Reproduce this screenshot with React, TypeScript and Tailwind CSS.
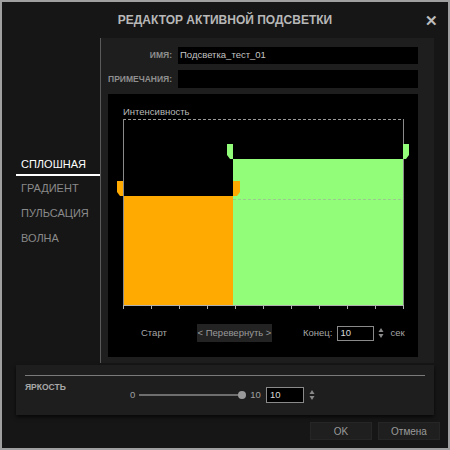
import React from 'react';

const menu = ['СПЛОШНАЯ', 'ГРАДИЕНТ', 'ПУЛЬСАЦИЯ', 'ВОЛНА'];

function Spinner() {
  return (
    <svg width="6" height="12" viewBox="0 0 6 12" className="shrink-0 block">
      <polygon points="3,1 5.5,5 0.5,5" fill="#8a8a8a" />
      <polygon points="0.5,7 5.5,7 3,11" fill="#8a8a8a" />
    </svg>
  );
}

function Chart() {
  const ticks = Array.from({ length: 11 }, (_, i) => 15 + i * 28);
  return (
    <svg width="310" height="192" viewBox="0 0 310 192" className="block">
      {/* blocks */}
      <rect x="15" y="77" width="110" height="109" fill="#ffaa00" />
      <rect x="125" y="40" width="170" height="146" fill="#91fd78" />
      {/* frame */}
      <line x1="15" y1="0.5" x2="295" y2="0.5" stroke="#9a9a9a" strokeDasharray="3 2" />
      <line x1="15.5" y1="0" x2="15.5" y2="186" stroke="#8a8a8a" />
      <line x1="295.5" y1="0" x2="295.5" y2="186" stroke="#8a8a8a" />
      <line x1="125" y1="80.5" x2="295" y2="80.5" stroke="#9ac98f" strokeDasharray="3 2" />
      {/* axis */}
      <line x1="15" y1="186.5" x2="296" y2="186.5" stroke="#b0b0b0" />
      {ticks.map((t) => (
        <line key={t} x1={t + 0.5} y1="186" x2={t + 0.5} y2="190" stroke="#b0b0b0" />
      ))}
      {/* handles */}
      <polygon points="9,62 15,62 15,77 12,77 9,73" fill="#ffaa00" />
      <polygon points="125,62 132,62 132,73 129,77 125,77" fill="#ffaa00" />
      <polygon points="119,25 125,25 125,40 122,40 119,36" fill="#91fd78" />
      <polygon points="295,25 301,25 301,36 298,40 295,40" fill="#91fd78" />
    </svg>
  );
}

export default function App() {
  return (
    <div
      className="w-[450px] h-[450px] border-2 border-[#a0a0a0] bg-[#161616] flex flex-col overflow-hidden text-[#b4b4b4]"
      style={{ fontFamily: '"Liberation Sans", Arial, sans-serif' }}
    >
      {/* Header */}
      <div className="relative h-[36px] shrink-0 flex items-center justify-center">
        <span className="text-[12px] font-bold text-[#b8b8b8]">РЕДАКТОР АКТИВНОЙ ПОДСВЕТКИ</span>
        <span className="absolute right-[10px] top-[8px] text-[15px] font-bold text-[#bdbdbd]">✕</span>
      </div>

      {/* Main */}
      <div className="flex h-[325px] shrink-0">
        {/* Left menu */}
        <div className="w-[98px] shrink-0 flex flex-col pt-[116px]">
          {menu.map((m, i) =>
            i === 0 ? (
              <div key={m} className="ml-[14px] h-[22px] pl-[5px] flex items-center border-b-2 border-white text-[11px] text-white">
                {m}
              </div>
            ) : (
              <div key={m} className="h-[25px] pl-[19px] flex items-center text-[11px] text-[#8a8a8a] first-of-type:mt-0">
                {m}
              </div>
            )
          )}
        </div>

        {/* Right panel */}
        <div className="w-[334px] shrink-0 bg-[#1e1e1e] border-l border-[#5a5a5a] flex flex-col pt-[9px]">
          <div className="flex items-center h-[17px]">
            <span className="w-[71px] text-right text-[8.5px] font-bold text-[#8e8e8e]">ИМЯ:</span>
            <div className="ml-[6px] w-[240px] h-[17px] bg-black flex items-center pl-[2px] text-[9.5px] text-[#c4c4c4]">
              Подсветка_тест_01
            </div>
          </div>
          <div className="flex items-center h-[18px] mt-[6px]">
            <span className="w-[71px] text-right text-[8.5px] font-bold text-[#8e8e8e]">ПРИМЕЧАНИЯ:</span>
            <div className="ml-[6px] w-[240px] h-[18px] bg-black" />
          </div>

          {/* Chart box */}
          <div className="ml-[7px] mt-[6px] w-[310px] h-[263px] bg-black flex flex-col">
            <div className="pl-[15px] pt-[13px] h-[25px] text-[9.5px] text-[#b8b8b8] leading-[10px]">
              Интенсивность
            </div>
            <Chart />
            <div className="flex items-center h-[18px] mt-[13px] text-[9.5px] text-[#a6a6a6] whitespace-nowrap">
              <span className="ml-[33px] w-[56px]">Старт</span>
              <div className="w-[75px] h-[18px] bg-[#232323] flex items-center justify-center text-[#9a9a9a]">
                &lt; Перевернуть &gt;
              </div>
              <span className="ml-[31px]">Конец:</span>
              <div className="ml-[5px] w-[37px] h-[15px] border border-[#8a8a8a] bg-black flex items-center pl-[2px] text-[#d8d8d8]">
                10
              </div>
              <span className="ml-[4px]">
                <Spinner />
              </span>
              <span className="ml-[6px]">сек</span>
            </div>
          </div>
        </div>
      </div>

      {/* Brightness */}
      <div className="mx-[14px] mt-[2px] h-[50px] shrink-0 bg-[#1e1e1e] shadow-[0_2px_4px_rgba(0,0,0,0.7)] flex flex-col px-[9px] pt-[10px]">
        <div className="h-px bg-[#7a7a7a]" />
        <div className="relative flex-1">
          <span className="absolute left-0 top-[5px] text-[8.5px] font-bold text-[#a8a8a8]">ЯРКОСТЬ</span>
          <div className="flex items-center h-[16px] mt-[11px] pl-[105px] text-[9.5px] text-[#a0a0a0]">
            <span>0</span>
            <div className="ml-[4px] w-[103px] h-[2px] bg-[#6e6e6e] relative">
              <span className="absolute right-[-4px] top-[-3px] w-[8px] h-[8px] rounded-full bg-[#9a9a9a]" />
            </div>
            <span className="ml-[8px]">10</span>
            <div className="ml-[5px] w-[38px] h-[16px] border border-[#8a8a8a] bg-black flex items-center pl-[3px] text-[#d8d8d8]">
              10
            </div>
            <span className="ml-[5px]">
              <Spinner />
            </span>
          </div>
        </div>
      </div>

      {/* Footer buttons */}
      <div className="flex justify-end gap-[6px] pr-[8px] mt-[7px]">
        <div className="w-[62px] h-[18px] bg-[#1f1f1f] border border-[#262626] flex items-center justify-center text-[10px] text-[#9a9a9a]">
          OK
        </div>
        <div className="w-[62px] h-[18px] bg-[#1f1f1f] border border-[#262626] flex items-center justify-center text-[10px] text-[#9a9a9a]">
          Отмена
        </div>
      </div>
    </div>
  );
}
